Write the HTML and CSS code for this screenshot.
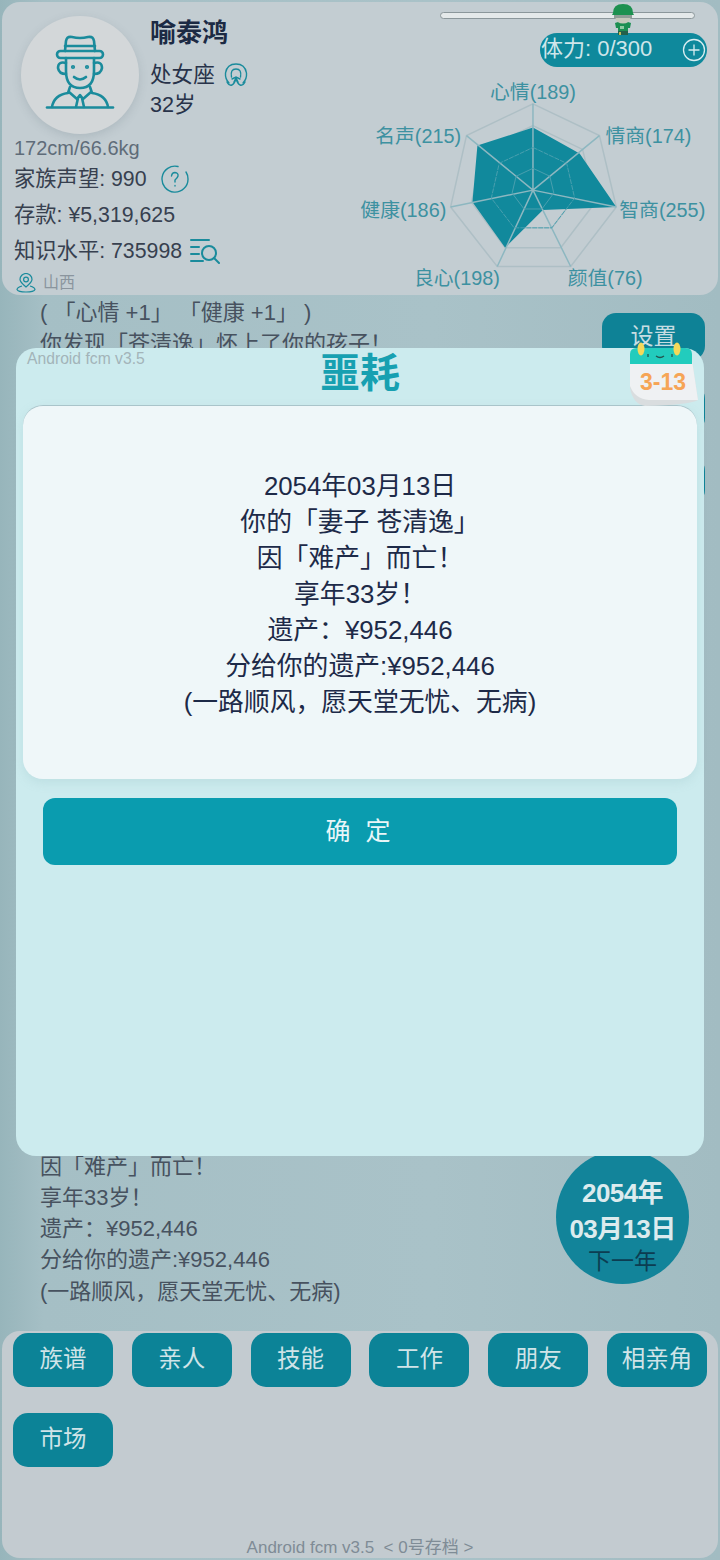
FILE: index.html
```html
<!DOCTYPE html>
<html lang="en">
<head>
    <meta charset="UTF-8">
    <title>喻泰鸿</title>
    <link rel="stylesheet" href="styles.css">
</head>
<body>
    <div class="page">
        <div class="status-card">
            <div class="status-left">
                <div class="profile">
                    <div class="avatar">
                        <svg width="70" height="76" viewBox="0 0 70 76" fill="none" stroke="#1a8b9c" stroke-width="2.6" stroke-linecap="round" stroke-linejoin="round">
                            <path d="M20 18 L21 8 Q22 3 27 4 Q35 6 43 4 Q48 3 49 8 L50 18"/>
                            <path d="M20 13 H50"/>
                            <rect x="12" y="18" width="46" height="7" rx="3.5"/>
                            <path d="M21 25 V38 Q21 55 35 55 Q49 55 49 38 V25"/>
                            <path d="M21 30 Q13 28 13 35 Q14 41 21 41"/>
                            <path d="M49 30 Q57 28 57 35 Q56 41 49 41"/>
                            <path d="M29 44 Q35 49 41 44"/>
                            <path d="M25 54 L23 60 Q9 62 7 74"/>
                            <path d="M45 54 L47 60 Q61 62 63 74"/>
                            <path d="M24 59 L32 66 L35 62 L38 66 L46 59"/>
                            <path d="M33 65 L31 74 M37 65 L39 74"/>
                            <path d="M2 74.5 H68"/>
                            <circle cx="28" cy="34" r="0.8" fill="#1a8b9c"/>
                            <circle cx="42" cy="34" r="0.8" fill="#1a8b9c"/>
                        </svg>
                    </div>
                    <div class="profile-text">
                        <div class="name">喻泰鸿</div>
                        <div class="sign">处女座
                            <svg width="24" height="26" viewBox="0 0 24 26" fill="none" stroke="#1a8b9c" stroke-width="1.4" stroke-linecap="round">
                                <path d="M5 21 Q1 17 1.5 11 Q3 2 12 2 Q21 2 22.5 11 Q23 17 19 21"/>
                                <path d="M7.5 15 Q6 7 12 7 Q18 7 16.5 15"/>
                                <path d="M3 20 Q5 24 8 23 Q11 21 12 16 Q13 21 16 23 Q19 24 21 20"/>
                                <path d="M8 17 L12 15 L16 17 M10 20 L12 16 L14 20"/>
                            </svg>
                        </div>
                        <div class="age">32岁</div>
                    </div>
                </div>
                <div class="body-size">172cm/66.6kg</div>
                <div class="stat">家族声望: 990
                    <svg class="stat-help" width="28" height="28" viewBox="0 0 28 28" fill="none" stroke="#1a8b9c" stroke-width="1.4" stroke-linecap="round">
                        <path d="M17 1.5 A13 13 0 1 0 27 14 Q27 10 25 7"/>
                        <path d="M10.5 11 Q11 7.5 14 7.5 Q17.5 8 17 11 Q16.5 13 14 15 V17"/>
                        <path d="M14 20.5 V21"/>
                    </svg>
                </div>
                <div class="stat">存款: ¥5,319,625</div>
                <div class="stat">知识水平: 735998
                    <svg class="stat-search" width="30" height="26" viewBox="0 0 30 26" fill="none" stroke="#1a8b9c" stroke-width="2" stroke-linecap="round">
                        <path d="M1 2 H19 M1 9 H9 M1 16 H9 M1 23 H13"/>
                        <circle cx="19" cy="15" r="7"/>
                        <path d="M24 20 L29 25"/>
                    </svg>
                </div>
                <div class="place">
                    <svg width="20" height="20" viewBox="0 0 20 20" fill="none" stroke="#1a8b9c" stroke-width="1.2">
                        <path d="M10 14 Q4 9 4 6.5 A6 6 0 0 1 16 6.5 Q16 9 10 14 Z"/>
                        <circle cx="10" cy="6.5" r="2.4"/>
                        <path d="M6 13 Q1 14.5 1 16.5 Q2 19 10 19 Q18 19 19 16.5 Q19 14.5 14 13"/>
                    </svg>
                    山西
                </div>
            </div>
            <div class="status-right">
                <div class="progress-track">
                    <svg class="runner" width="26" height="32" viewBox="0 0 26 32">
                        <path d="M5 20 L8 19 H18 L21 20 L20 25 H18 V28 H8 V25 H6 Z" fill="#1c8f52"/>
                        <rect x="10" y="23" width="4" height="3" fill="#8fc9a0"/>
                        <rect x="8" y="28" width="10" height="4" fill="#23604a"/>
                        <rect x="9" y="29" width="2" height="3" fill="#c3b954"/>
                        <ellipse cx="13" cy="15" rx="7.5" ry="5.5" fill="#c5c9bb"/>
                        <path d="M3 10 Q3 1 13 1 Q23 1 23 10 L24 12 H2 Z" fill="#1c9150"/>
                        <rect x="4" y="12" width="18" height="3" fill="#8e9e96"/>
                    </svg>
                </div>
                <div class="stamina">
                    <span class="stamina-text">体力: 0/300</span>
                    <svg width="24" height="24" viewBox="0 0 24 24" fill="none" stroke="#d8edf0" stroke-width="1.3">
                        <circle cx="12" cy="12" r="10.5"/>
                        <path d="M12 6.5 V17.5 M6.5 12 H17.5"/>
                    </svg>
                </div>
                <svg class="radar" width="378" height="218" viewBox="340 78 378 218">
                    <g fill="none" stroke="#aebfc5" stroke-width="1.5">
                        <polygon points="533,103 600,135 617,207 571,267 497,267 450,207 466,135"/>
                        <polygon points="533,125 583,149 596,202 561,248 505,248 471,202 483,149"/>
                        <polygon points="533,147 567,163 575,198 552,228 514,228 491,198 499,163"/>
                        <polygon points="533,168 550,176 554,193 542,209 524,209 512,193 516,176"/>
                    </g>
                    <polygon points="533,127 580,153 617,207 543,210 505,248 472,202 477,145" fill="#11899c"/>
                    <path d="M533 190 L533 103 M533 190 L600 135 M533 190 L617 207 M533 190 L571 267 M533 190 L497 267 M533 190 L450 207 M533 190 L466 135" stroke="#8db7c0" stroke-width="1.5"/>
                    <g fill="none" stroke="#4a9fae" stroke-width="1">
                        <polygon points="533,147 567,163 575,198 552,228 514,228 491,198 499,163" stroke-dasharray="5 1"/>
                        <polygon points="533,168 550,176 554,193 542,209 524,209 512,193 516,176"/>
                    </g>
                    <g class="radar-labels">
                        <text x="533" y="98" text-anchor="middle">心情(189)</text>
                        <text x="606" y="143">情商(174)</text>
                        <text x="620" y="217">智商(255)</text>
                        <text x="568" y="286">颜值(76)</text>
                        <text x="413" y="286">良心(198)</text>
                        <text x="359" y="217">健康(186)</text>
                        <text x="374" y="142">名声(215)</text>
                    </g>
                </svg>
            </div>
        </div>

        <div class="log">
            <div class="log-group">
                <div class="log-line">( 「心情 +1」 「健康 +1」 )</div>
                <div class="log-line">你发现「苍清逸」怀上了你的孩子！</div>
            </div>
            <div class="log-group">
                <div class="log-line">因「难产」而亡！</div>
                <div class="log-line">享年33岁！</div>
                <div class="log-line">遗产：¥952,446</div>
                <div class="log-line">分给你的遗产:¥952,446</div>
                <div class="log-line">(一路顺风，愿天堂无忧、无病)</div>
            </div>
        </div>

        <div class="side-buttons">
            <div class="side-btn">设置</div>
            <div class="side-btn"></div>
            <div class="side-btn"></div>
        </div>

        <div class="next-year">
            <div class="next-date">2054年</div>
            <div class="next-date">03月13日</div>
            <div class="next-label">下一年</div>
        </div>

        <div class="bottom-panel">
            <div class="menu">
                <div class="menu-btn">族谱</div>
                <div class="menu-btn">亲人</div>
                <div class="menu-btn">技能</div>
                <div class="menu-btn">工作</div>
                <div class="menu-btn">朋友</div>
                <div class="menu-btn">相亲角</div>
                <div class="menu-btn">市场</div>
            </div>
            <div class="save-info">Android fcm v3.5 &nbsp;&lt; 0号存档 &gt;</div>
        </div>

        <div class="modal">
            <div class="modal-version">Android fcm v3.5</div>
            <h1 class="modal-title">噩耗</h1>
            <svg class="calendar" width="70" height="70" viewBox="0 0 70 70">
                <path d="M1 20 H63 L69 60 Q60 65 16 66 Q4 64 1 48 Z" fill="#d9dddf"/>
                <path d="M1 20 H63 L69 60 H20 Q6 59 1 46 Z" fill="#eff1f3"/>
                <path d="M1 14 Q1 8 8 8 H56 Q63 8 63 14 V24 H1 Z" fill="#22ccbd"/>
                <ellipse cx="12" cy="9" rx="3.5" ry="6.5" fill="#f4d959"/>
                <ellipse cx="48" cy="9" rx="3.5" ry="6.5" fill="#f4d959"/>
                <path d="M27 16 Q31 19 35 16" fill="none" stroke="#23544f" stroke-width="1.3"/>
                <path d="M19 14 V17 M43 14 V17" stroke="#23544f" stroke-width="1.3"/>
                <text x="34" y="50" text-anchor="middle" class="calendar-date">3-13</text>
            </svg>
            <div class="modal-body">
                <div>2054年03月13日</div>
                <div>你的「妻子 苍清逸」</div>
                <div>因「难产」而亡！</div>
                <div>享年33岁！</div>
                <div>遗产：¥952,446</div>
                <div>分给你的遗产:¥952,446</div>
                <div>(一路顺风，愿天堂无忧、无病)</div>
            </div>
            <div class="modal-btn">确 定</div>
        </div>
    </div>
</body>
</html>
```

FILE: styles.css
```css
* {
    box-sizing: border-box;
}
body {
    margin: 0;
    font-family: "Liberation Sans", "Noto Sans CJK SC", sans-serif;
    color: #37404f;
}
.page {
    position: relative;
    width: 720px;
    height: 1560px;
    padding: 2px 2px 2px;
    display: flex;
    flex-direction: column;
    overflow: hidden;
    background: linear-gradient(90deg, #97b5bb 0%, #a5bfc5 6%, #a9c2c8 60%, #a2bcc2 100%);
}
.status-card {
    height: 293px;
    flex-shrink: 0;
    display: flex;
    justify-content: space-between;
    background-color: #c3cdd2;
    border-radius: 18px;
}
.status-left {
    width: 338px;
    padding: 14px 0 0 12px;
}
.profile {
    display: flex;
    height: 120px;
    margin-left: 7px;
}
.avatar {
    width: 118px;
    height: 118px;
    border-radius: 50%;
    background-color: #d3d7d9;
    box-shadow: 0 3px 10px rgba(90, 110, 120, 0.2);
    display: flex;
    align-items: center;
    justify-content: center;
    flex-shrink: 0;
}
.avatar svg {
    margin-bottom: 8px;
}
.profile-text {
    margin-left: 11px;
    color: #28334a;
}
.name {
    font-size: 26px;
    line-height: 34px;
    font-weight: bold;
    color: #1c2a44;
}
.sign {
    display: flex;
    align-items: center;
    gap: 9px;
    font-size: 21.6px;
    line-height: 30px;
    margin-top: 10px;
}
.age {
    font-size: 21.6px;
    line-height: 30px;
}
.body-size {
    font-size: 20px;
    line-height: 24px;
    margin-bottom: 1px;
    color: #5f6c79;
}
.stat {
    display: flex;
    align-items: center;
    font-size: 21.3px;
    line-height: 36px;
}
.stat-help {
    margin-left: 14px;
}
.stat-search {
    margin-left: 8px;
}
.place {
    display: flex;
    align-items: center;
    gap: 7px;
    font-size: 16px;
    line-height: 22px;
    color: #8a959e;
    margin-top: 3px;
    margin-left: 2px;
}
.status-right {
    width: 378px;
    flex-shrink: 0;
    display: flex;
    flex-direction: column;
    align-items: flex-end;
}
.progress-track {
    position: relative;
    width: 255px;
    height: 7px;
    margin: 10px 23px 0 0;
    background-color: #e4e9ea;
    border: 1px solid #8b979b;
    border-radius: 4px;
}
.runner {
    position: absolute;
    left: 169px;
    top: -10px;
}
.stamina {
    width: 167px;
    height: 34px;
    margin: 14px 11px 0 0;
    padding: 0 1px 0 1px;
    display: flex;
    align-items: center;
    justify-content: space-between;
    background-color: #0f899c;
    border-radius: 17px;
    color: #cfe6ea;
    font-size: 22px;
}
.stamina-text {
    line-height: 28px;
    margin-bottom: 2px;
}
.radar {
    display: block;
    margin-top: 12px;
}
.radar-labels text {
    font-size: 20px;
    fill: #3d91a1;
}
.log {
    flex: 1;
    display: flex;
    flex-direction: column;
    justify-content: space-between;
    padding: 2px 0 24px 38px;
}
.log-line {
    font-size: 22px;
    line-height: 31.3px;
    color: #47525f;
}
.side-buttons {
    position: absolute;
    left: 602px;
    top: 313px;
    display: flex;
    flex-direction: column;
    gap: 25px;
}
.side-btn {
    width: 103px;
    height: 47px;
    background-color: #0e8296;
    border-radius: 14px;
    color: #c6dde2;
    font-size: 23px;
    line-height: 47px;
    text-align: center;
}
.next-year {
    position: absolute;
    left: 556px;
    top: 1150px;
    width: 133px;
    height: 134px;
    padding-top: 25px;
    background-color: #12849a;
    border-radius: 50%;
    text-align: center;
}
.next-date {
    font-size: 26px;
    line-height: 36px;
    font-weight: bold;
    color: #dcebee;
    letter-spacing: -0.6px;
}
.next-label {
    font-size: 23px;
    line-height: 28px;
    color: #0c3d52;
}
.bottom-panel {
    height: 227px;
    flex-shrink: 0;
    display: flex;
    flex-direction: column;
    padding-top: 2px;
    background-color: #c3cbd0;
    border-radius: 18px;
}
.menu {
    display: grid;
    grid-template-columns: repeat(6, 100px);
    justify-content: space-between;
    row-gap: 26px;
    padding: 0 11px;
}
.menu-btn {
    height: 54px;
    background-color: #0c8397;
    border-radius: 15px;
    color: #d0e4e8;
    font-size: 23.5px;
    line-height: 53px;
    text-align: center;
}
.save-info {
    margin-top: auto;
    margin-bottom: -1px;
    text-align: center;
    font-size: 17px;
    line-height: 22px;
    color: #7f8c96;
}
.modal {
    position: absolute;
    left: 16px;
    top: 348px;
    width: 688px;
    height: 808px;
    padding: 0 7px;
    background-color: #ccebee;
    border-radius: 20px;
}
.modal-version {
    position: absolute;
    left: 11px;
    top: 2px;
    font-size: 15.7px;
    line-height: 18px;
    color: #a3b4b9;
}
.modal-title {
    margin: 0;
    height: 57px;
    font-size: 40px;
    line-height: 50px;
    font-weight: bold;
    color: #17a0b1;
    text-align: center;
}
.calendar {
    position: absolute;
    left: 613px;
    top: -8px;
}
.calendar-date {
    font-size: 23px;
    font-weight: bold;
    fill: #f6a556;
}
.modal-body {
    height: 374px;
    padding-top: 62px;
    background-color: #eff7f9;
    border-radius: 20px;
    border-top: 1px solid #a9c4ca;
    text-align: center;
    font-size: 25.8px;
    line-height: 36px;
    color: #1d2a48;
    box-shadow: 0 4px 10px rgba(150, 190, 195, 0.25);
}
.modal-btn {
    height: 67px;
    margin: 19px 20px 0;
    background-color: #0a9caf;
    border-radius: 12px;
    color: #e9f6f8;
    font-size: 25px;
    line-height: 67px;
    letter-spacing: 4px;
    text-align: center;
}
```
